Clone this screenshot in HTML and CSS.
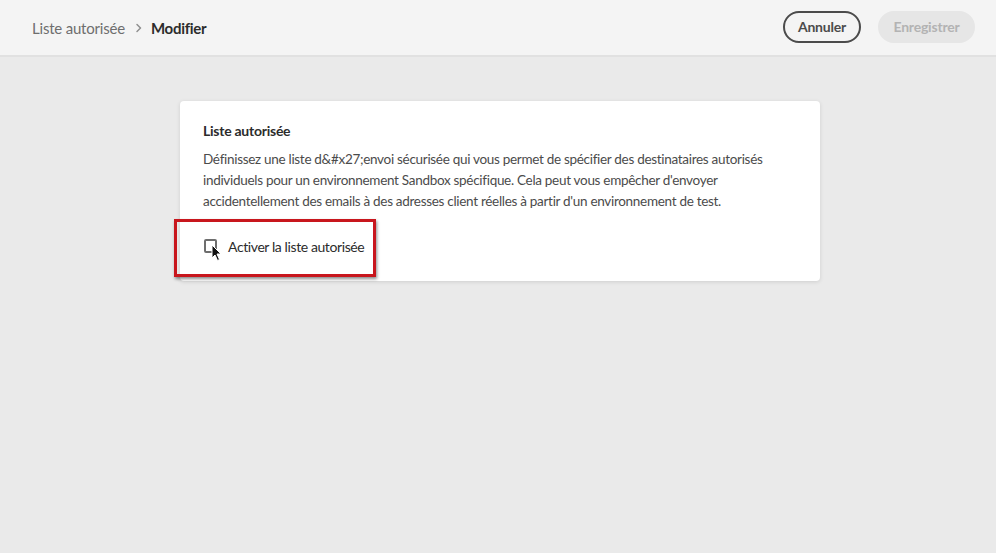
FILE: index.html
```
<!DOCTYPE html>
<html lang="fr">
<head>
<meta charset="utf-8">
<link rel="stylesheet" href="styles.css">
</head>
<body>
<header class="topbar">
  <nav class="crumbs">
    <span class="crumb">Liste autorisée</span>
    <svg class="chev" width="8" height="10" viewBox="0 0 8 10"><path d="M2 1.5 L5.5 5 L2 8.5" fill="none" stroke="#909090" stroke-width="1.5" stroke-linecap="round" stroke-linejoin="round"/></svg>
    <span class="crumb current">Modifier</span>
  </nav>
  <div class="actions">
    <button class="btn btn-outline">Annuler</button>
    <button class="btn btn-disabled">Enregistrer</button>
  </div>
</header>
<main class="content">
  <section class="card">
    <h2 class="card-title">Liste autorisée</h2>
    <p class="card-text">Définissez une liste d&amp;#x27;envoi sécurisée qui vous permet de spécifier des destinataires autorisés<br>individuels pour un environnement Sandbox spécifique. Cela peut vous empêcher d'envoyer<br>accidentellement des emails à des adresses client réelles à partir d'un environnement de test.</p>
    <div class="highlight">
      <label class="check">
        <span class="box"></span>
        <span class="check-label">Activer la liste autorisée</span>
      </label>
      <svg class="cursor" width="12" height="18" viewBox="0 0 12 18"><path d="M1 1 L1 14 L4 11 L6.5 16.5 L8.5 15.5 L6 10 L10 10 Z" fill="#111" stroke="#fff" stroke-width="1"/></svg>
    </div>
  </section>
</main>
</body>
</html>
```
FILE: styles.css
```
* { box-sizing: border-box; }
html, body { margin: 0; padding: 0; }
body {
  width: 996px;
  height: 553px;
  background: #eaeaea;
  font-family: "Lato", "Open Sans", sans-serif;
  color: #4b4b4b;
  overflow: hidden;
}
.topbar {
  height: 57px;
  background: #f4f4f4;
  border-bottom: 2px solid #e1e1e1;
  display: flex;
  align-items: center;
  justify-content: space-between;
  padding: 0 21px 0 32px;
}
.crumbs { display: flex; align-items: center; }
.crumb { font-size: 15px; letter-spacing: -0.2px; color: #6e6e6e; }
.chev { margin: 1px 8px 0 10px; }
.crumb.current { font-weight: 700; color: #2c2c2c; letter-spacing: -0.3px; }
.actions { display: flex; gap: 17px; margin-top: -2px; }
.btn {
  font-family: inherit;
  font-size: 14px;
  font-weight: 700;
  letter-spacing: -0.2px;
  height: 32px;
  border-radius: 16px;
  padding: 0;
  cursor: default;
}
.btn-outline {
  background: transparent;
  border: 2px solid #4b4b4b;
  color: #4b4b4b;
  width: 78px;
}
.btn-disabled {
  background: #e6e6e6;
  border: 2px solid #e6e6e6;
  color: #b3b3b3;
  width: 97px;
}
.content {
  display: flex;
  justify-content: center;
  padding-top: 44px;
  padding-left: 4px;
}
.card {
  width: 640px;
  background: #fff;
  border-radius: 4px;
  box-shadow: 0 1px 4px rgba(0,0,0,0.12);
  padding: 21px 23px 4px 23px;
}
.card-title {
  font-size: 14px;
  font-weight: 700;
  letter-spacing: -0.25px;
  color: #2c2c2c;
  margin: 0 0 9px 0;
  line-height: 18px;
}
.card-text {
  font-size: 13.5px;
  letter-spacing: -0.3px;
  line-height: 21px;
  color: #4b4b4b;
  margin: 0;
  white-space: nowrap;
}
.highlight {
  position: relative;
  margin: 7px 0 0 -29px;
  width: 202px;
  height: 58px;
  border: 3px solid #c8161d;
  box-shadow: 1px 2px 3px rgba(0,0,0,0.45);
  display: flex;
  align-items: center;
  padding-left: 27px;
}
.check { display: flex; align-items: center; gap: 11px; margin-top: -4px; }
.box {
  width: 13px;
  height: 14px;
  border: 2px solid #6e6e6e;
  border-radius: 2px;
  background: #fff;
}
.check-label { font-size: 14px; letter-spacing: -0.4px; color: #2c2c2c; white-space: nowrap; }
.cursor { position: absolute; left: 34px; top: 22px; }
```
